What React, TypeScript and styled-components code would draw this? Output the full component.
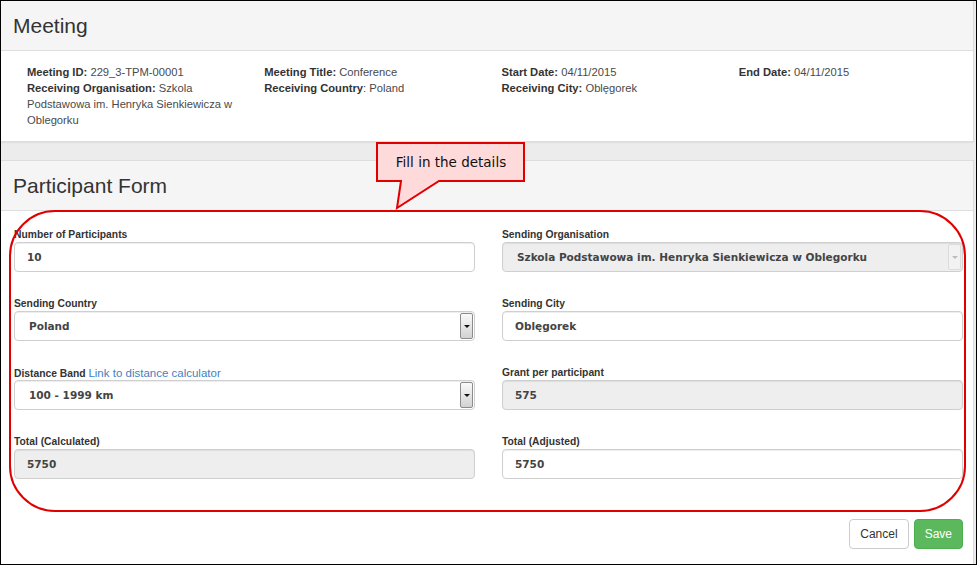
import React from 'react';
import styled, { createGlobalStyle } from 'styled-components';

const GlobalStyle = createGlobalStyle`
  html, body {
    margin: 0;
    padding: 0;
    background: #ffffff;
  }
  * {
    box-sizing: border-box;
  }
`;

const Frame = styled.div`
  position: relative;
  width: 977px;
  height: 565px;
  border: 1px solid #000;
  background: #ececec;
  display: flex;
  flex-direction: column;
  overflow: hidden;
  font-family: "Liberation Sans", Arial, sans-serif;
  color: #333;
`;

const Panel = styled.section<{ $grow?: boolean }>`
  background: #fff;
  margin-right: 2px;
  border-right: 1px solid #dcdcdc;
  border-top: ${p => (p.$grow ? '1px solid #dedede' : 'none')};
  border-bottom: ${p => (p.$grow ? 'none' : '1px solid #dedede')};
  box-shadow: 0 1px 1px rgba(0, 0, 0, 0.05);
  display: flex;
  flex-direction: column;
  flex: ${p => (p.$grow ? '1' : 'none')};
`;

const PanelHeading = styled.header`
  height: 50px;
  background: #f5f5f5;
  border-bottom: 1px solid #dedede;
  padding-left: 12px;
  font-size: 21px;
  line-height: 49px;
  color: #333;
`;

const Gap = styled.div`
  height: 18px;
`;

const MeetingBody = styled.div`
  display: grid;
  grid-template-columns: repeat(4, 1fr);
  padding: 13px 12px 13px 11px;
  font-size: 11.2px;
  line-height: 16px;
  color: #4a4a4a;
`;

const MeetingCol = styled.div`
  padding: 0 15px;
`;

const Line = styled.div``;

const Key = styled.b`
  color: #333;
`;

const FormBody = styled.div`
  display: grid;
  grid-template-columns: 1fr 1fr;
  column-gap: 27px;
  row-gap: 25px;
  padding: 17px 10px 0 13px;
`;

const Field = styled.div`
  display: flex;
  flex-direction: column;
`;

const FieldLabel = styled.label`
  display: block;
  height: 14px;
  font-size: 10.3px;
  font-weight: bold;
  line-height: 14px;
  color: #333;
`;

const CalcLink = styled.a`
  font-size: 11.5px;
  font-weight: normal;
  color: #3f7fc0;
  text-decoration: none;
`;

const TextInput = styled.input<{ $disabled?: boolean }>`
  height: 30px;
  width: 100%;
  border: 1px solid #cfcfcf;
  border-radius: 4px;
  padding: 0 12px;
  background: ${p => (p.$disabled ? '#eeeeee' : '#fff')};
  box-shadow: inset 0 1px 1px rgba(0, 0, 0, 0.075);
  font-family: "DejaVu Sans", Verdana, sans-serif;
  font-size: 10.5px;
  font-weight: bold;
  color: #444;
  outline: none;
`;

const SelectBox = styled.div<{ $disabled?: boolean }>`
  height: 30px;
  display: flex;
  align-items: stretch;
  border: 1px solid #cfcfcf;
  border-radius: 4px;
  background: ${p => (p.$disabled ? '#eeeeee' : '#fff')};
  box-shadow: inset 0 1px 1px rgba(0, 0, 0, 0.075);
  padding: 1px;
`;

const SelectValue = styled.div`
  flex: 1;
  display: flex;
  align-items: center;
  padding-left: 13px;
  font-family: "DejaVu Sans", Verdana, sans-serif;
  font-size: 10.5px;
  font-weight: bold;
  color: #444;
`;

const SelectArrow = styled.span<{ $disabled?: boolean }>`
  width: 13px;
  display: flex;
  align-items: center;
  justify-content: center;
  border: 1px solid ${p => (p.$disabled ? '#dcdcdc' : '#8c8c8c')};
  border-radius: 2px;
  background: ${p =>
    p.$disabled
      ? '#f2f2f2'
      : 'linear-gradient(to bottom, #fafafa 0%, #e6e6e6 50%, #d2d2d2 100%)'};

  &::after {
    content: '';
    border-left: 3px solid transparent;
    border-right: 3px solid transparent;
    border-top: 3px solid ${p => (p.$disabled ? '#bbb' : '#111')};
  }
`;

const Actions = styled.div`
  display: flex;
  justify-content: flex-end;
  gap: 5px;
  padding: 40px 10px 0 0;
`;

const Button = styled.button<{ $primary?: boolean }>`
  height: 30px;
  padding: 0 10px;
  border-radius: 4px;
  border: 1px solid ${p => (p.$primary ? '#4cae4c' : '#cccccc')};
  background: ${p => (p.$primary ? '#5cb85c' : '#fff')};
  color: ${p => (p.$primary ? '#fff' : '#333')};
  font-family: "Liberation Sans", Arial, sans-serif;
  font-size: 12px;
`;

const Annotation = styled.svg`
  position: absolute;
  left: 0;
  top: 0;
  pointer-events: none;
`;

const CalloutText = styled.div`
  position: absolute;
  left: 376px;
  top: 142px;
  width: 148px;
  height: 38px;
  display: flex;
  align-items: center;
  justify-content: center;
  font-family: "DejaVu Sans", Verdana, sans-serif;
  font-size: 13.5px;
  color: #111;
`;

type FieldDef = {
  label: string;
  value: string;
  kind: 'input' | 'select';
  disabled?: boolean;
  link?: string;
};

const fields: FieldDef[] = [
  { label: 'Number of Participants', value: '10', kind: 'input' },
  {
    label: 'Sending Organisation',
    value: 'Szkola Podstawowa im. Henryka Sienkiewicza w Oblegorku',
    kind: 'select',
    disabled: true,
  },
  { label: 'Sending Country', value: 'Poland', kind: 'select' },
  { label: 'Sending City', value: 'Oblęgorek', kind: 'input' },
  { label: 'Distance Band', value: '100 - 1999 km', kind: 'select', link: 'Link to distance calculator' },
  { label: 'Grant per participant', value: '575', kind: 'input', disabled: true },
  { label: 'Total (Calculated)', value: '5750', kind: 'input', disabled: true },
  { label: 'Total (Adjusted)', value: '5750', kind: 'input' },
];

export default function App() {
  return (
    <>
      <GlobalStyle />
      <Frame>
        <Panel>
          <PanelHeading>Meeting</PanelHeading>
          <MeetingBody>
            <MeetingCol>
              <Line><Key>Meeting ID:</Key> 229_3-TPM-00001</Line>
              <Line>
                <Key>Receiving Organisation:</Key> Szkola Podstawowa im. Henryka Sienkiewicza w Oblegorku
              </Line>
            </MeetingCol>
            <MeetingCol>
              <Line><Key>Meeting Title:</Key> Conference</Line>
              <Line><Key>Receiving Country</Key>: Poland</Line>
            </MeetingCol>
            <MeetingCol>
              <Line><Key>Start Date:</Key> 04/11/2015</Line>
              <Line><Key>Receiving City:</Key> Oblęgorek</Line>
            </MeetingCol>
            <MeetingCol>
              <Line><Key>End Date:</Key> 04/11/2015</Line>
            </MeetingCol>
          </MeetingBody>
        </Panel>

        <Gap />

        <Panel $grow>
          <PanelHeading>Participant Form</PanelHeading>
          <FormBody>
            {fields.map(f => (
              <Field key={f.label}>
                <FieldLabel>
                  {f.label}
                  {f.link && <> <CalcLink href="#">{f.link}</CalcLink></>}
                </FieldLabel>
                {f.kind === 'input' ? (
                  <TextInput $disabled={f.disabled} readOnly value={f.value} />
                ) : (
                  <SelectBox $disabled={f.disabled}>
                    <SelectValue>{f.value}</SelectValue>
                    <SelectArrow $disabled={f.disabled} />
                  </SelectBox>
                )}
              </Field>
            ))}
          </FormBody>
          <Actions>
            <Button>Cancel</Button>
            <Button $primary>Save</Button>
          </Actions>
        </Panel>

        {/* red annotation drawn over the form */}
        <Annotation width="977" height="565" viewBox="0 0 977 565">
          <rect x="9" y="210" width="955" height="300" rx="45" ry="45" fill="none" stroke="#e00000" strokeWidth="2" />
          <path
            d="M376 142 H523 V180 H438 L396 207 L400 180 H376 Z"
            fill="#ffdada"
            stroke="#e00000"
            strokeWidth="2"
            strokeLinejoin="miter"
          />
        </Annotation>
        <CalloutText>Fill in the details</CalloutText>
      </Frame>
    </>
  );
}
